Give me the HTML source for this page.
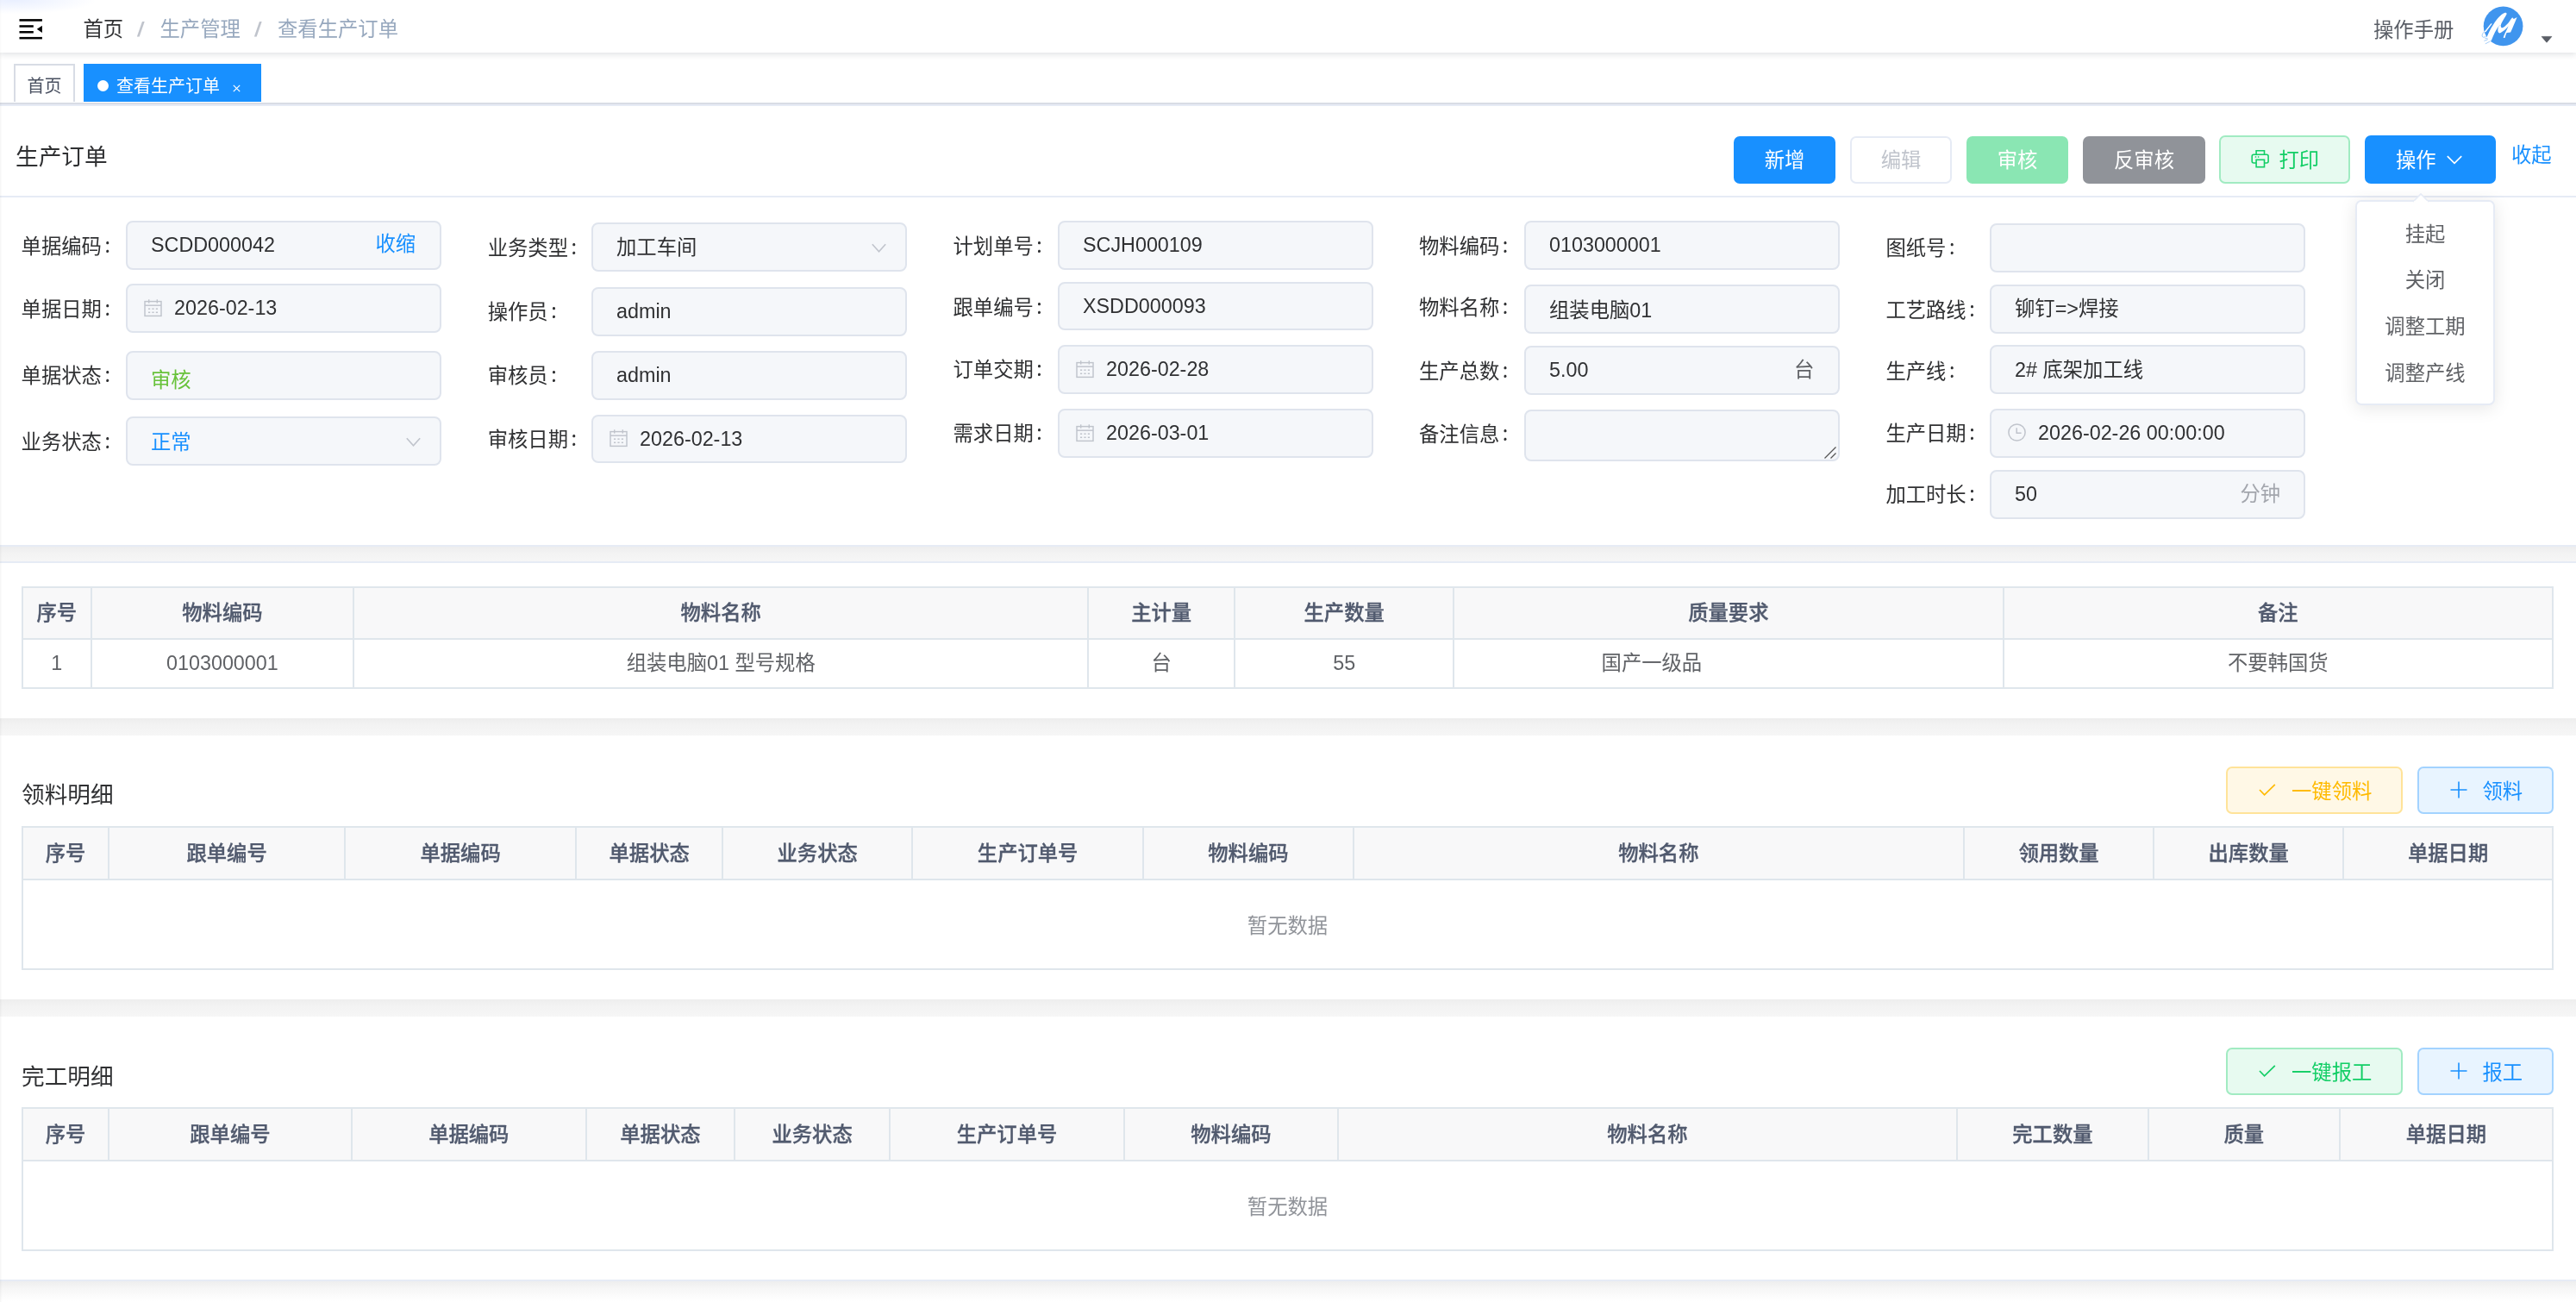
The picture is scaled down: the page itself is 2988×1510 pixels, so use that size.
<!DOCTYPE html>
<html lang="zh-CN"><head><meta charset="utf-8"><title>查看生产订单</title>
<style>
*{box-sizing:border-box;margin:0;padding:0}
html,body{width:2988px;height:1510px;overflow:hidden;background:#fff}
body{position:relative;will-change:transform;font-family:"Liberation Sans","Noto Sans CJK SC",sans-serif;font-size:23.33px;color:#303133;-webkit-font-smoothing:antialiased}
.abs{position:absolute}
.t{position:absolute;white-space:nowrap;line-height:1}
.navbar{position:absolute;left:0;top:0;width:2988px;height:61px;background:#fff;box-shadow:0 2px 7px rgba(0,21,41,.13);z-index:3}
.tags{position:absolute;left:0;top:61px;width:2988px;height:60px;background:#fff;border-bottom:2px solid #d8dce5;z-index:2}
.tag{position:absolute;top:13px;height:44px;font-size:20px;line-height:44px;white-space:nowrap}
.lbl{position:absolute;white-space:nowrap;color:#303133;height:56px;line-height:56px;font-size:23.33px}
.inp{position:absolute;height:56px;width:366px;background:#f5f7fa;border:2px solid #dfe4ed;border-radius:8px;font-size:23.33px;line-height:52px;color:#303133;white-space:nowrap}
.inp .v{position:absolute;left:27px;top:0}
.inp .vi{position:absolute;left:54px;top:0}
.inp svg{position:absolute}
.btn{position:absolute;height:56px;border-radius:7px;font-size:23.33px;line-height:56px;white-space:nowrap;text-align:center}
.tbl{position:absolute;border:2px solid #dfe6ec;background:#fff}
.th{position:absolute;top:0;background:#f8f8f9;color:#515a6e;font-weight:500;-webkit-text-stroke:0.35px #515a6e;text-align:center;white-space:nowrap;border-bottom:2px solid #dfe6ec}
.td{position:absolute;color:#606266;text-align:center;white-space:nowrap}
.vl{position:absolute;width:2px;background:#dfe6ec}
.gap{position:absolute;left:0;width:2988px}
.pop{position:absolute;left:2732px;top:232px;width:162px;height:238px;background:#fff;border:2px solid #e6ebf5;border-radius:7px;box-shadow:0 3px 20px 0 rgba(0,0,0,.1)}
.pop div{position:absolute;left:0;width:158px;text-align:center;color:#606266;font-size:23.33px;height:54px;line-height:54px}
.c{display:inline-block;line-height:1;position:relative;top:-1px;margin-left:3.5px;font-family:"Noto Sans CJK SC",sans-serif}
.sec{position:absolute;font-size:26.67px;color:#303133;white-space:nowrap;line-height:1}
</style></head>
<body>
<div class="abs" style="left:0;top:61px;width:3px;height:1449px;background:linear-gradient(90deg,rgba(0,0,0,.04),rgba(0,0,0,.012) 60%,rgba(0,0,0,0));z-index:50"></div><div class="abs" style="left:0;top:0;width:2px;height:61px;background:linear-gradient(90deg,rgba(0,0,0,.02),rgba(0,0,0,0));z-index:50"></div>
<div class="abs" style="left:0;top:0;width:110px;height:16px;background:radial-gradient(ellipse at 15% 0%,rgba(215,226,255,.55),rgba(215,226,255,0) 72%);z-index:60"></div>
<div class="gap" style="top:634px;height:17px;background:linear-gradient(#ededee,#f3f3f3 45%,#f6f6f6)"></div>
<div class="gap" style="top:833px;height:20px;background:linear-gradient(#eeeeee,#f3f3f3 45%,#f6f6f6)"></div>
<div class="gap" style="top:1159px;height:20px;background:linear-gradient(#eeeeee,#f3f3f3 45%,#f6f6f6)"></div>
<div class="gap" style="top:1486px;height:24px;background:linear-gradient(#eeeeee,#f6f6f6 35%,#fcfcfc 75%,#fff)"></div>
<div class="gap" style="top:121px;height:2px;background:#e6ebf5"></div>
<div class="gap" style="top:632px;height:2px;background:#e6ebf5"></div>
<div class="gap" style="top:651px;height:2px;background:#e6ebf5"></div>
<div class="gap" style="top:1484px;height:2px;background:#e6ebf5"></div>
<div class="navbar">
<svg class="abs" style="left:22px;top:22px" width="28" height="24" viewBox="0 0 28 24" fill="#000"><rect x="0.5" y="0.1" width="26.4" height="2.6"/><rect x="0.5" y="7.2" width="16.3" height="2.5"/><rect x="0.5" y="14" width="16.3" height="2.5"/><rect x="0.5" y="20.9" width="26.4" height="2.5"/><path d="M20.8 11.7L26.9 7.8V15.9Z"/></svg>
<div class="t" style="left:96.5px;top:22.5px;color:#303133">首页</div>
<div class="t" style="left:160px;top:22.5px;color:#c0c4cc;font-weight:700;transform:skewX(-9deg)">/</div>
<div class="t" style="left:185.5px;top:22.5px;color:#97a8be">生产管理</div>
<div class="t" style="left:296px;top:22.5px;color:#c0c4cc;font-weight:700;transform:skewX(-9deg)">/</div>
<div class="t" style="left:322px;top:22.5px;color:#97a8be">查看生产订单</div>
<div class="t" style="left:2753px;top:24px;color:#5a5e66">操作手册</div>
<svg class="abs" style="left:2876px;top:5px" width="54" height="52" viewBox="0 0 54 52"><circle cx="27.6" cy="25.35" r="22.85" fill="#4095ee"/><g transform="scale(0.041494) translate(0,-24.1)"><path d="M150 1150L190 985C235 860 300 720 400 570C490 435 600 300 700 265C740 255 770 270 760 300C720 380 620 520 600 600L540 632C470 720 400 860 330 1040L285 1050L250 1095Z" fill="#fff"/><path d="M600 600C590 650 610 690 650 680C720 650 820 540 880 440L920 390L960 432L1050 385C1010 480 930 680 870 810L760 822C740 860 725 910 715 955L672 962C660 930 720 830 810 632C760 700 650 800 560 832C510 810 500 740 540 632Z" fill="#fff"/><path d="M330 552L352 572C300 640 230 730 178 800L125 800C190 720 270 620 330 552Z" fill="#fff"/><path d="M135 790C95 830 60 880 80 925C100 960 150 950 200 900M150 965L235 990M130 1045L230 1010M165 1130L290 1062" stroke="#5aa4f1" stroke-width="13" fill="none"/></g></svg>
<svg class="abs" style="left:2947px;top:41px" width="14" height="10" viewBox="0 0 14 10"><path d="M1.2 1.4H12.8L7 8.2Z" fill="#5a5e66" stroke="#5a5e66" stroke-width="0.8" stroke-linejoin="round"/></svg>
</div>
<div class="tags">
<div class="tag" style="left:16px;width:71px;border:2px solid #d8dce5;border-bottom:none;color:#495060;background:#fff;text-align:center;line-height:48px">首页</div>
<div class="tag" style="left:97px;width:206px;background:#1890ff;color:#fff"><span class="abs" style="left:15.6px;top:18.5px;width:13.4px;height:13.4px;border-radius:50%;background:#fff"></span><span class="abs" style="left:38px;top:4px">查看生产订单</span><svg class="abs" style="left:172.5px;top:23.5px" width="9" height="9" viewBox="0 0 9 9" stroke="#fff" stroke-width="1.2"><path d="M0.8 0.8L8.2 8.2M8.2 0.8L0.8 8.2"/></svg></div>
</div>
<div class="sec" style="left:18px;top:169.3px">生产订单</div>
<div class="btn" style="left:2011px;top:158px;width:118px;height:55px;line-height:55px;background:#1890ff;color:#fff;padding-top:1px">新增</div>
<div class="btn" style="left:2146px;top:158px;width:118px;height:55px;line-height:55px;background:#fff;color:#c0c4cc;border:2px solid #e6ebf5;line-height:53px">编辑</div>
<div class="btn" style="left:2281px;top:158px;width:118px;height:55px;line-height:55px;background:#8ae6b3;color:#fff;padding-top:1px">审核</div>
<div class="btn" style="left:2416px;top:158px;width:142px;height:55px;line-height:55px;background:#909399;color:#fff;padding-top:1px">反审核</div>
<div class="btn" style="left:2574px;top:157px;width:152px;height:56px;line-height:56px;background:#e7faf0;color:#13ce66;border:2px solid #a1ebc2"><svg class="abs" style="left:34px;top:14px" width="24" height="23" viewBox="0 0 24 23" fill="none" stroke="#13ce66" stroke-width="1.6"><path d="M7.1 6.2V1.8H16.5V6.2"/><path d="M7.1 16H4.2Q2.2 16 2.2 14V8.2Q2.2 6.2 4.2 6.2H19.1Q21.1 6.2 21.1 8.2V14Q21.1 16 19.1 16H16.5"/><rect x="7.1" y="12.3" width="9.4" height="8.4"/><path d="M5.8 8.9H7.2M8.9 8.9H10.3" stroke-width="1.5"/></svg><span class="abs" style="left:67.5px;top:-1px">打印</span></div>
<div class="btn" style="left:2743px;top:157px;width:152px;height:56px;line-height:56px;background:#1890ff;color:#fff"><span class="abs" style="left:36px;top:1px">操作</span><svg style="position:absolute;left:94.5px;top:22.5px" width="18" height="11.4" viewBox="0 0 18 11.4" fill="none" stroke="#fff" stroke-width="1.7"><path d="M0.8 1.2L9.0 9.4L17.2 1.2"/></svg></div>
<div class="t" style="left:2913px;top:169px;color:#1890ff">收起</div>
<div class="gap" style="top:227px;height:2px;background:#e6ebf5"></div>
<div class="lbl" style="left:24.6px;top:257.5px">单据编码<span class="c">:</span></div>
<div class="inp" style="left:146px;top:256px;height:56.5px"><span class="v" style="">SCDD000042</span><span class="abs" style="left:287.5px;top:-1px;color:#1890ff">收缩</span></div>
<div class="lbl" style="left:24.6px;top:330.5px">单据日期<span class="c">:</span></div>
<div class="inp" style="left:146px;top:329px;height:56.5px"><svg style="left:19px;top:15.5px" width="21" height="21" viewBox="0 0 21 21" fill="none" stroke="#c0c4cc" stroke-width="1.45"><rect x="1" y="2.6" width="19" height="16.8"/><line x1="1" y1="7.2" x2="20" y2="7.2"/><line x1="5.7" y1="0.3" x2="5.7" y2="4.6"/><line x1="15.3" y1="0.3" x2="15.3" y2="4.6"/><g stroke-width="1.5"><line x1="5" y1="11.2" x2="7.2" y2="11.2"/><line x1="9.4" y1="11.2" x2="11.6" y2="11.2"/><line x1="13.8" y1="11.2" x2="16" y2="11.2"/><line x1="5" y1="15.3" x2="7.2" y2="15.3"/><line x1="9.4" y1="15.3" x2="11.6" y2="15.3"/><line x1="13.8" y1="15.3" x2="16" y2="15.3"/></g></svg><span class="vi">2026-02-13</span></div>
<div class="lbl" style="left:24.6px;top:408px">单据状态<span class="c">:</span></div>
<div class="inp" style="left:146px;top:407px;height:56.5px"><span class="v" style="color:#67c23a;top:6px">审核</span></div>
<div class="lbl" style="left:24.6px;top:485px">业务状态<span class="c">:</span></div>
<div class="inp" style="left:146px;top:483px;height:56.5px"><span class="v" style="color:#1890ff;top:2px">正常</span><svg style="position:absolute;left:323px;top:21.8px" width="17" height="11.8" viewBox="0 0 17 11.8" fill="none" stroke="#c0c4cc" stroke-width="1.6"><path d="M0.8 1.2L8.5 9.8L16.2 1.2"/></svg></div>
<div class="lbl" style="left:565.7px;top:259.5px">业务类型<span class="c">:</span></div>
<div class="inp" style="left:686px;top:258px;height:56.5px"><span class="v" style="top:1px">加工车间</span><svg style="position:absolute;left:323px;top:21.8px" width="17" height="11.8" viewBox="0 0 17 11.8" fill="none" stroke="#c0c4cc" stroke-width="1.6"><path d="M0.8 1.2L8.5 9.8L16.2 1.2"/></svg></div>
<div class="lbl" style="left:565.7px;top:334.3px">操作员<span class="c">:</span></div>
<div class="inp" style="left:686px;top:333px;height:56.5px"><span class="v" style="">admin</span></div>
<div class="lbl" style="left:565.7px;top:408.2px">审核员<span class="c">:</span></div>
<div class="inp" style="left:686px;top:407px;height:56.5px"><span class="v" style="">admin</span></div>
<div class="lbl" style="left:565.7px;top:482px">审核日期<span class="c">:</span></div>
<div class="inp" style="left:686px;top:480.5px;height:56.5px"><svg style="left:19px;top:15.5px" width="21" height="21" viewBox="0 0 21 21" fill="none" stroke="#c0c4cc" stroke-width="1.45"><rect x="1" y="2.6" width="19" height="16.8"/><line x1="1" y1="7.2" x2="20" y2="7.2"/><line x1="5.7" y1="0.3" x2="5.7" y2="4.6"/><line x1="15.3" y1="0.3" x2="15.3" y2="4.6"/><g stroke-width="1.5"><line x1="5" y1="11.2" x2="7.2" y2="11.2"/><line x1="9.4" y1="11.2" x2="11.6" y2="11.2"/><line x1="13.8" y1="11.2" x2="16" y2="11.2"/><line x1="5" y1="15.3" x2="7.2" y2="15.3"/><line x1="9.4" y1="15.3" x2="11.6" y2="15.3"/><line x1="13.8" y1="15.3" x2="16" y2="15.3"/></g></svg><span class="vi">2026-02-13</span></div>
<div class="lbl" style="left:1105.5px;top:257.5px">计划单号<span class="c">:</span></div>
<div class="inp" style="left:1227px;top:256px;height:56.5px"><span class="v" style="">SCJH000109</span></div>
<div class="lbl" style="left:1105.5px;top:328.7px">跟单编号<span class="c">:</span></div>
<div class="inp" style="left:1227px;top:326.5px;height:56.5px"><span class="v" style="">XSDD000093</span></div>
<div class="lbl" style="left:1105.5px;top:401.4px">订单交期<span class="c">:</span></div>
<div class="inp" style="left:1227px;top:400px;height:56.5px"><svg style="left:19px;top:15.5px" width="21" height="21" viewBox="0 0 21 21" fill="none" stroke="#c0c4cc" stroke-width="1.45"><rect x="1" y="2.6" width="19" height="16.8"/><line x1="1" y1="7.2" x2="20" y2="7.2"/><line x1="5.7" y1="0.3" x2="5.7" y2="4.6"/><line x1="15.3" y1="0.3" x2="15.3" y2="4.6"/><g stroke-width="1.5"><line x1="5" y1="11.2" x2="7.2" y2="11.2"/><line x1="9.4" y1="11.2" x2="11.6" y2="11.2"/><line x1="13.8" y1="11.2" x2="16" y2="11.2"/><line x1="5" y1="15.3" x2="7.2" y2="15.3"/><line x1="9.4" y1="15.3" x2="11.6" y2="15.3"/><line x1="13.8" y1="15.3" x2="16" y2="15.3"/></g></svg><span class="vi">2026-02-28</span></div>
<div class="lbl" style="left:1105.5px;top:475.3px">需求日期<span class="c">:</span></div>
<div class="inp" style="left:1227px;top:474px;height:56.5px"><svg style="left:19px;top:15.5px" width="21" height="21" viewBox="0 0 21 21" fill="none" stroke="#c0c4cc" stroke-width="1.45"><rect x="1" y="2.6" width="19" height="16.8"/><line x1="1" y1="7.2" x2="20" y2="7.2"/><line x1="5.7" y1="0.3" x2="5.7" y2="4.6"/><line x1="15.3" y1="0.3" x2="15.3" y2="4.6"/><g stroke-width="1.5"><line x1="5" y1="11.2" x2="7.2" y2="11.2"/><line x1="9.4" y1="11.2" x2="11.6" y2="11.2"/><line x1="13.8" y1="11.2" x2="16" y2="11.2"/><line x1="5" y1="15.3" x2="7.2" y2="15.3"/><line x1="9.4" y1="15.3" x2="11.6" y2="15.3"/><line x1="13.8" y1="15.3" x2="16" y2="15.3"/></g></svg><span class="vi">2026-03-01</span></div>
<div class="lbl" style="left:1646px;top:257.5px">物料编码<span class="c">:</span></div>
<div class="inp" style="left:1768px;top:256px;height:56.5px"><span class="v" style="">0103000001</span></div>
<div class="lbl" style="left:1646px;top:329.3px">物料名称<span class="c">:</span></div>
<div class="inp" style="left:1768px;top:330px;height:56.5px"><span class="v" style="top:2px">组装电脑01</span></div>
<div class="lbl" style="left:1646px;top:403.2px">生产总数<span class="c">:</span></div>
<div class="inp" style="left:1768px;top:401px;height:56.5px"><span class="v" style="">5.00</span><span class="abs" style="left:311px;top:0px;color:#606266">台</span></div>
<div class="lbl" style="left:1646px;top:476px">备注信息<span class="c">:</span></div>
<div class="inp" style="left:1768px;top:475px;height:59.5px"><svg style="left:345px;top:40px" width="16" height="16" viewBox="0 0 16 16" stroke="#555" stroke-width="1.3"><path d="M1.5 14.5L14.5 1.5M8.5 14.5L14.5 8.5"/></svg></div>
<div class="lbl" style="left:2187.4px;top:260.4px">图纸号<span class="c">:</span></div>
<div class="inp" style="left:2308px;top:259px;height:56.5px"></div>
<div class="lbl" style="left:2187.4px;top:332px">工艺路线<span class="c">:</span></div>
<div class="inp" style="left:2308px;top:330px;height:56.5px"><span class="v" style="">铆钉=&gt;焊接</span></div>
<div class="lbl" style="left:2187.4px;top:402.6px">生产线<span class="c">:</span></div>
<div class="inp" style="left:2308px;top:400px;height:56.5px"><span class="v" style="top:1px">2# 底架加工线</span></div>
<div class="lbl" style="left:2187.4px;top:474.5px">生产日期<span class="c">:</span></div>
<div class="inp" style="left:2308px;top:474px;height:56.5px"><svg style="left:19px;top:15px" width="21" height="21" viewBox="0 0 21 21" fill="none" stroke="#c0c4cc" stroke-width="1.5"><circle cx="10.5" cy="10.5" r="9.6"/><path d="M10.2 5.2V11.3H15.6"/></svg><span class="vi">2026-02-26 00:00:00</span></div>
<div class="lbl" style="left:2187.4px;top:546px">加工时长<span class="c">:</span></div>
<div class="inp" style="left:2308px;top:545px;height:56.5px"><span class="v" style="">50</span><span class="abs" style="left:288.5px;top:0;color:#a3a6ad">分钟</span></div>
<div class="pop">
<div style="top:10.5px">挂起</div>
<div style="top:64.3px">关闭</div>
<div style="top:118.1px">调整工期</div>
<div style="top:171.89999999999998px">调整产线</div>
</div>
<svg class="abs" style="left:2798px;top:223px;z-index:5" width="20" height="12" viewBox="0 0 20 12"><path d="M1 11L10 2L19 11" fill="#fff" stroke="#e6ebf5" stroke-width="1.6"/><rect x="2.2" y="10" width="15.6" height="2" fill="#fff"/></svg>
<div class="tbl" style="left:25px;top:680px;width:2937px;height:119px">
<div class="th" style="left:0;width:2933px;height:60px"></div>
<div class="th" style="left:0px;width:77.6px;height:58px;line-height:59px;border:none;background:none">序号</div>
<div class="th" style="left:79.6px;width:302.6px;height:58px;line-height:59px;border:none;background:none">物料编码</div>
<div class="th" style="left:384.2px;width:850.0px;height:58px;line-height:59px;border:none;background:none">物料名称</div>
<div class="th" style="left:1236.2px;width:168.0px;height:58px;line-height:59px;border:none;background:none">主计量</div>
<div class="th" style="left:1406.2px;width:252.0px;height:58px;line-height:59px;border:none;background:none">生产数量</div>
<div class="th" style="left:1660.2px;width:635.3999999999999px;height:58px;line-height:59px;border:none;background:none">质量要求</div>
<div class="th" style="left:2297.6px;width:635.4000000000001px;height:58px;line-height:59px;border:none;background:none">备注</div>
<div class="vl" style="left:77.6px;top:0;height:115px"></div>
<div class="vl" style="left:382.2px;top:0;height:115px"></div>
<div class="vl" style="left:1234.2px;top:0;height:115px"></div>
<div class="vl" style="left:1404.2px;top:0;height:115px"></div>
<div class="vl" style="left:1658.2px;top:0;height:115px"></div>
<div class="vl" style="left:2295.6px;top:0;height:115px"></div>
<div class="td" style="left:0px;width:77.6px;top:60px;height:55px;line-height:55px">1</div>
<div class="td" style="left:79.6px;width:302.6px;top:60px;height:55px;line-height:55px">0103000001</div>
<div class="td" style="left:384.2px;width:850.0px;top:60px;height:55px;line-height:55px">组装电脑01 型号规格</div>
<div class="td" style="left:1236.2px;width:168.0px;top:60px;height:55px;line-height:55px">台</div>
<div class="td" style="left:1406.2px;width:252.0px;top:60px;height:55px;line-height:55px">55</div>
<div class="td" style="left:1571.2px;width:635.3999999999999px;top:60px;height:55px;line-height:55px">国产一级品</div>
<div class="td" style="left:2297.6px;width:635.4000000000001px;top:60px;height:55px;line-height:55px">不要韩国货</div>
</div>
<div class="sec" style="left:25px;top:908.5px">领料明细</div>
<div class="btn" style="left:2582px;top:889px;width:205px;height:54.5px;line-height:50.5px;background:#fff8e6;color:#ffba00;border:2px solid #ffe399"><svg class="abs" style="left:35.5px;top:18px" width="20" height="15" viewBox="0 0 20 15" fill="none" stroke="#ffba00" stroke-width="1.7"><path d="M1 7L6.6 12.8L18.8 0.9"/></svg><span class="abs" style="left:74px;top:1.5px">一键领料</span></div>
<div class="btn" style="left:2804px;top:889px;width:158px;height:54.5px;line-height:50.5px;background:#e8f4ff;color:#1890ff;border:2px solid #a3d3ff"><svg class="abs" style="left:35.5px;top:15.3px" width="20" height="20" viewBox="0 0 20 20" fill="none" stroke="#1890ff" stroke-width="1.6"><path d="M10 0.5V19.5M0.5 10H19.5"/></svg><span class="abs" style="left:73.5px;top:1.5px">领料</span></div>
<div class="tbl" style="left:25px;top:958px;width:2937px;height:167px">
<div class="th" style="left:0;width:2933px;height:61px"></div>
<div class="th" style="left:0px;width:98px;height:59px;line-height:60px;border:none;background:none">序号</div>
<div class="th" style="left:100px;width:272.2px;height:59px;line-height:60px;border:none;background:none">跟单编号</div>
<div class="th" style="left:374.2px;width:265.90000000000003px;height:59px;line-height:60px;border:none;background:none">单据编码</div>
<div class="th" style="left:642.1px;width:168.10000000000002px;height:59px;line-height:60px;border:none;background:none">单据状态</div>
<div class="th" style="left:812.2px;width:218.0px;height:59px;line-height:60px;border:none;background:none">业务状态</div>
<div class="th" style="left:1032.2px;width:265.89999999999986px;height:59px;line-height:60px;border:none;background:none">生产订单号</div>
<div class="th" style="left:1300.1px;width:241.60000000000014px;height:59px;line-height:60px;border:none;background:none">物料编码</div>
<div class="th" style="left:1543.7px;width:706.3px;height:59px;line-height:60px;border:none;background:none">物料名称</div>
<div class="th" style="left:2252px;width:218.0999999999999px;height:59px;line-height:60px;border:none;background:none">领用数量</div>
<div class="th" style="left:2472.1px;width:218.0999999999999px;height:59px;line-height:60px;border:none;background:none">出库数量</div>
<div class="th" style="left:2692.2px;width:240.80000000000018px;height:59px;line-height:60px;border:none;background:none">单据日期</div>
<div class="vl" style="left:98px;top:0;height:59px"></div>
<div class="vl" style="left:372.2px;top:0;height:59px"></div>
<div class="vl" style="left:640.1px;top:0;height:59px"></div>
<div class="vl" style="left:810.2px;top:0;height:59px"></div>
<div class="vl" style="left:1030.2px;top:0;height:59px"></div>
<div class="vl" style="left:1298.1px;top:0;height:59px"></div>
<div class="vl" style="left:1541.7px;top:0;height:59px"></div>
<div class="vl" style="left:2250px;top:0;height:59px"></div>
<div class="vl" style="left:2470.1px;top:0;height:59px"></div>
<div class="vl" style="left:2690.2px;top:0;height:59px"></div>
<div class="td" style="left:0;width:2933px;top:94px;height:40px;line-height:40px;color:#909399">暂无数据</div>
</div>
<div class="sec" style="left:25px;top:1235.5px">完工明细</div>
<div class="btn" style="left:2582px;top:1215px;width:205px;height:54.5px;line-height:50.5px;background:#e7faf0;color:#13ce66;border:2px solid #a1ebc2"><svg class="abs" style="left:35.5px;top:18px" width="20" height="15" viewBox="0 0 20 15" fill="none" stroke="#13ce66" stroke-width="1.7"><path d="M1 7L6.6 12.8L18.8 0.9"/></svg><span class="abs" style="left:74px;top:1.5px">一键报工</span></div>
<div class="btn" style="left:2804px;top:1215px;width:158px;height:54.5px;line-height:50.5px;background:#e8f4ff;color:#1890ff;border:2px solid #a3d3ff"><svg class="abs" style="left:35.5px;top:15.3px" width="20" height="20" viewBox="0 0 20 20" fill="none" stroke="#1890ff" stroke-width="1.6"><path d="M10 0.5V19.5M0.5 10H19.5"/></svg><span class="abs" style="left:73.5px;top:1.5px">报工</span></div>
<div class="tbl" style="left:25px;top:1284px;width:2937px;height:167px">
<div class="th" style="left:0;width:2933px;height:61px"></div>
<div class="th" style="left:0px;width:98px;height:59px;line-height:60px;border:none;background:none">序号</div>
<div class="th" style="left:100px;width:279.8px;height:59px;line-height:60px;border:none;background:none">跟单编号</div>
<div class="th" style="left:381.8px;width:269.99999999999994px;height:59px;line-height:60px;border:none;background:none">单据编码</div>
<div class="th" style="left:653.8px;width:170.30000000000007px;height:59px;line-height:60px;border:none;background:none">单据状态</div>
<div class="th" style="left:826.1px;width:177.9999999999999px;height:59px;line-height:60px;border:none;background:none">业务状态</div>
<div class="th" style="left:1006.0999999999999px;width:269.9000000000001px;height:59px;line-height:60px;border:none;background:none">生产订单号</div>
<div class="th" style="left:1278px;width:245.79999999999995px;height:59px;line-height:60px;border:none;background:none">物料编码</div>
<div class="th" style="left:1525.8px;width:716.2px;height:59px;line-height:60px;border:none;background:none">物料名称</div>
<div class="th" style="left:2244px;width:219.9000000000001px;height:59px;line-height:60px;border:none;background:none">完工数量</div>
<div class="th" style="left:2465.9px;width:219.9000000000001px;height:59px;line-height:60px;border:none;background:none">质量</div>
<div class="th" style="left:2687.8px;width:245.19999999999982px;height:59px;line-height:60px;border:none;background:none">单据日期</div>
<div class="vl" style="left:98px;top:0;height:59px"></div>
<div class="vl" style="left:379.8px;top:0;height:59px"></div>
<div class="vl" style="left:651.8px;top:0;height:59px"></div>
<div class="vl" style="left:824.1px;top:0;height:59px"></div>
<div class="vl" style="left:1004.0999999999999px;top:0;height:59px"></div>
<div class="vl" style="left:1276px;top:0;height:59px"></div>
<div class="vl" style="left:1523.8px;top:0;height:59px"></div>
<div class="vl" style="left:2242px;top:0;height:59px"></div>
<div class="vl" style="left:2463.9px;top:0;height:59px"></div>
<div class="vl" style="left:2685.8px;top:0;height:59px"></div>
<div class="td" style="left:0;width:2933px;top:94px;height:40px;line-height:40px;color:#909399">暂无数据</div>
</div>
</body></html>
